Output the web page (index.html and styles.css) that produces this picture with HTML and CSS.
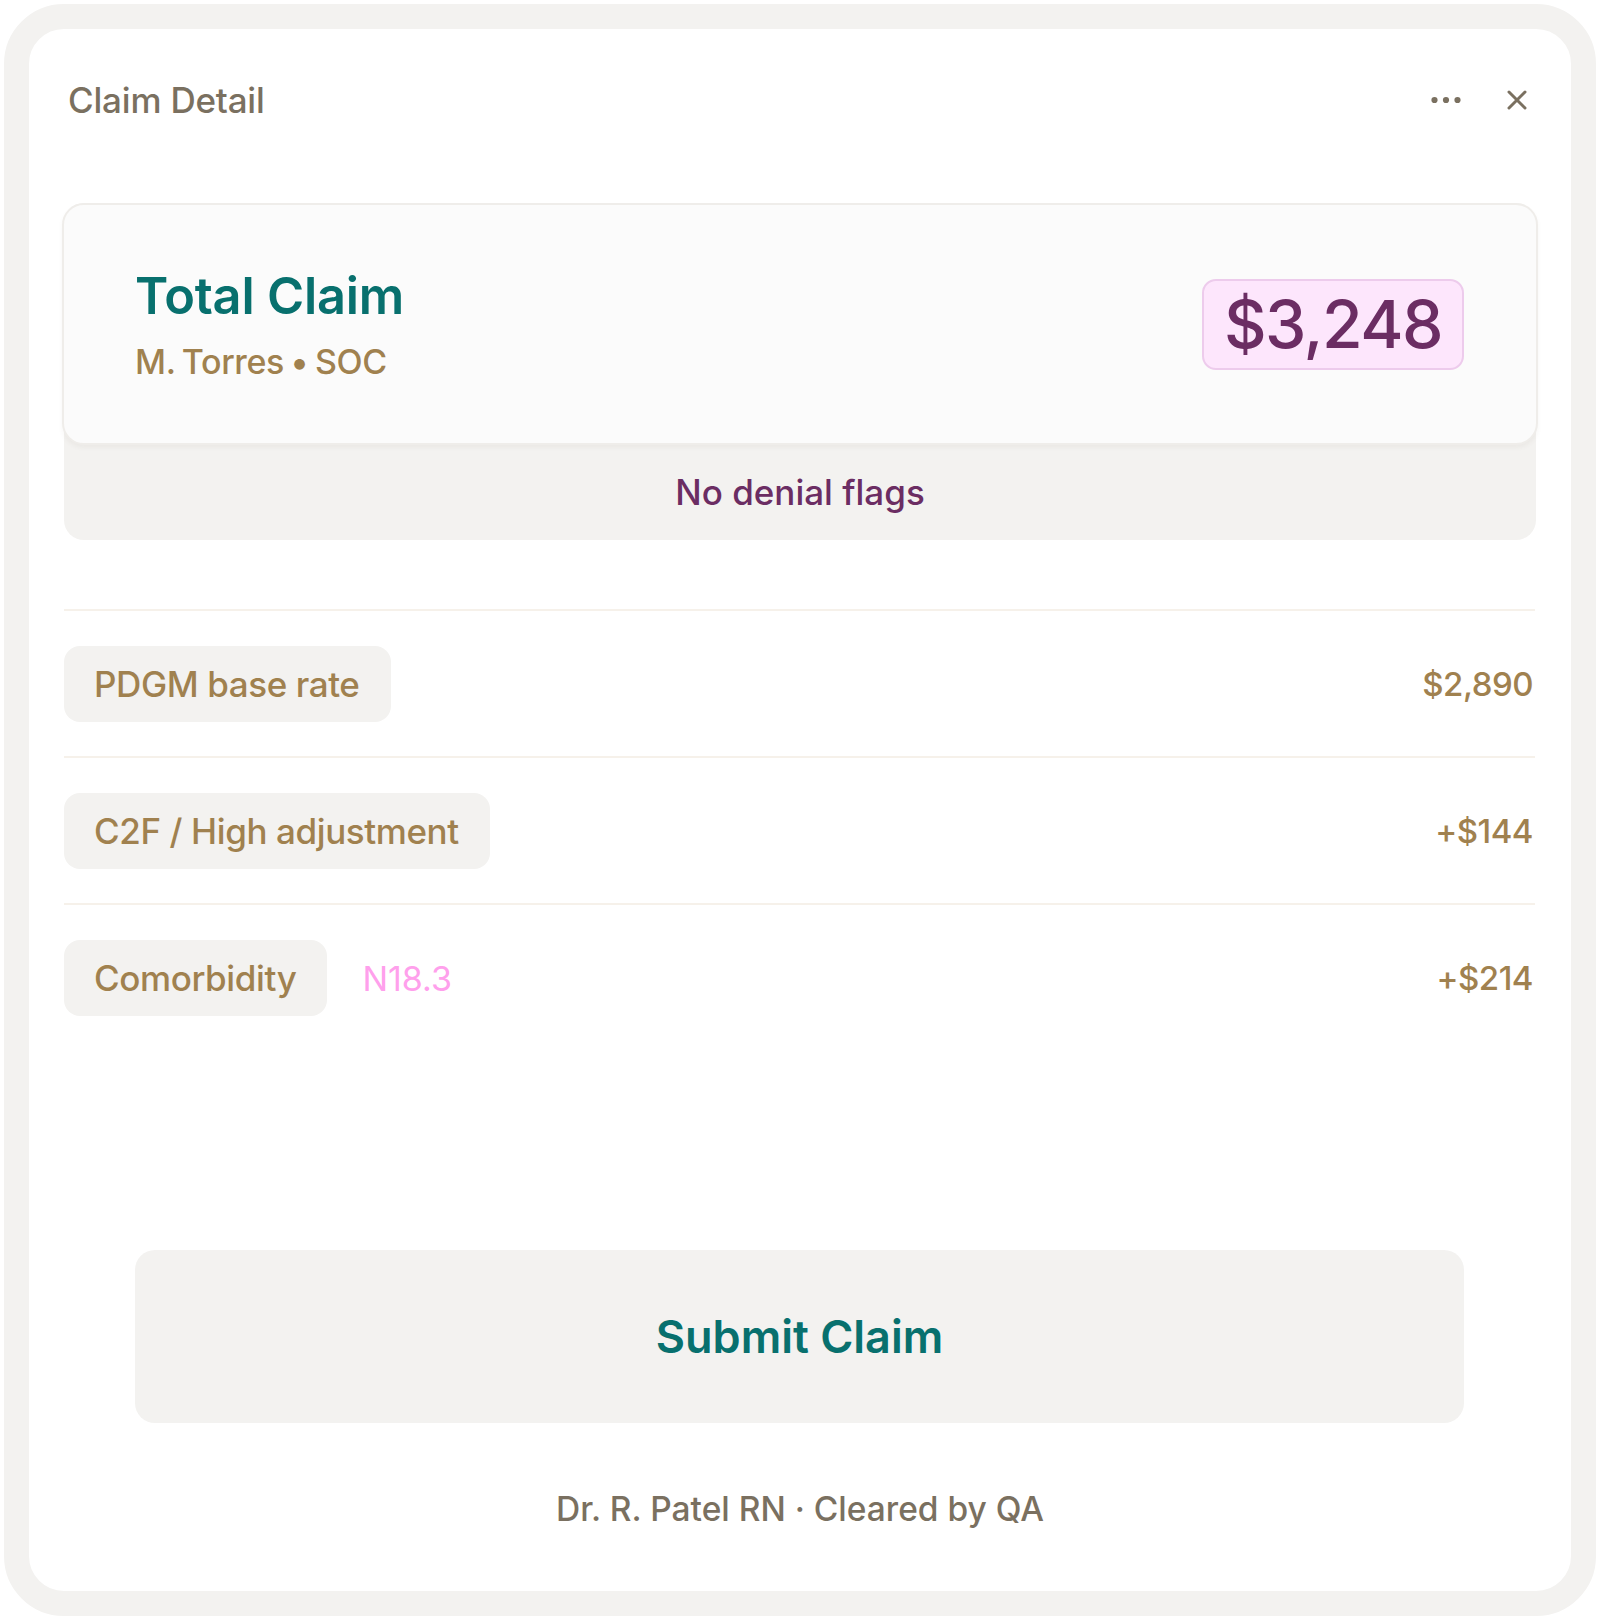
FILE: index.html
```
<!doctype html>
<html lang="en">
<head>
<meta charset="UTF-8">
<title>Claim Detail</title>
<link rel="stylesheet" href="styles.css">
</head>
<body>
<div class="frame">
	<div class="header">
		<h1>Claim Detail</h1>
		<div class="actions">
			<svg class="more" width="30" height="8" viewBox="0 0 30 8"><circle cx="3.5" cy="4" r="3.1"/><circle cx="15" cy="4" r="3.1"/><circle cx="26.5" cy="4" r="3.1"/></svg>
			<svg class="close" width="22" height="22" viewBox="0 0 22 22"><path d="M3 3L19 19M19 3L3 19"/></svg>
		</div>
	</div>

	<div class="summary">
		<div class="total">
			<div class="total-text">
				<div class="total-title">Total Claim</div>
				<div class="total-sub">M. Torres &bull; SOC</div>
			</div>
			<div class="amount">$3,248</div>
		</div>
		<div class="flags">No denial flags</div>
	</div>

	<!-- line items -->
	<div class="items">
		<div class="item">
			<span class="pill">PDGM base rate</span>
			<span class="value">$2,890</span>
		</div>
		<div class="item">
			<span class="pill">C2F / High adjustment</span>
			<span class="value">+$144</span>
		</div>
		<div class="item">
			<span class="pill">Comorbidity</span>
			<span class="code">N18.3</span>
			<span class="value">+$214</span>
		</div>
	</div>

	<button class="submit">Submit Claim</button>
	<div class="footer">Dr. R. Patel RN &middot; Cleared by QA</div>
</div>
</body>
</html>
```

FILE: styles.css
```
body{margin:0;background:#fff;font-family:Inter,"Liberation Sans",sans-serif;}
.frame{margin:4px;height:1612px;box-sizing:border-box;border:25px solid #f3f2f0;border-radius:60px;background:#fff;padding:31px 33px 57px;display:flex;flex-direction:column;}

.header{height:80px;display:flex;align-items:center;justify-content:space-between;padding:0 10px 0 6px;}
.header h1{margin:0;font-size:35px;font-weight:500;color:#7a7060;letter-spacing:-0.2px;}
.actions{display:flex;align-items:center;gap:45px;}
.more{fill:#7a7060;}
.close{stroke:#7a7060;stroke-width:3;stroke-linecap:round;fill:none;}

.summary{margin:63px 2px 0;background:#f3f2f0;border-radius:20px;}
.total{margin:0 -2px;height:242px;box-sizing:border-box;background:#fbfbfb;border:2px solid #efedea;border-radius:22px;box-shadow:0 3px 4px rgba(120,100,80,0.06);display:flex;align-items:center;justify-content:space-between;padding:0 72px 0 71px;}
.total-title{font-size:50.5px;line-height:61px;font-weight:600;color:#08706e;letter-spacing:-0.2px;}
.total-sub{margin-top:15px;font-size:34px;line-height:42px;font-weight:500;color:#a0814f;letter-spacing:-0.4px;word-spacing:-2px;}
.amount{height:91px;box-sizing:border-box;border:2px solid #edcbec;border-radius:14px;background:#fde6fc;padding:0 20px;line-height:87px;font-size:66px;font-weight:500;color:#6b2d63;letter-spacing:-1.5px;}
.flags{height:95px;line-height:95px;text-align:center;font-size:35px;font-weight:500;color:#6b2d63;}

.items{margin:69px 3px 0 2px;}
.item{display:flex;align-items:center;border-top:2px solid #f6f1ea;padding:35px 2px 34px 0;}
.pill{height:76px;line-height:76px;padding:0 31px 0 30px;background:#f3f2f0;border-radius:16px;font-size:35px;font-weight:500;color:#a0814f;letter-spacing:-0.4px;}
.code{margin-left:35px;font-size:34px;font-weight:400;color:#ffa0ec;}
.value{margin-left:auto;font-size:33px;font-weight:500;color:#a0814f;letter-spacing:-0.5px;}

.submit{margin:auto 74px 0 73px;height:173px;border:0;border-radius:20px;background:#f3f2f0;font-family:inherit;font-size:45px;font-weight:600;color:#08706e;}
.footer{margin-top:61px;height:50px;line-height:50px;text-align:center;font-size:33.5px;font-weight:500;color:#7a7060;}
```
